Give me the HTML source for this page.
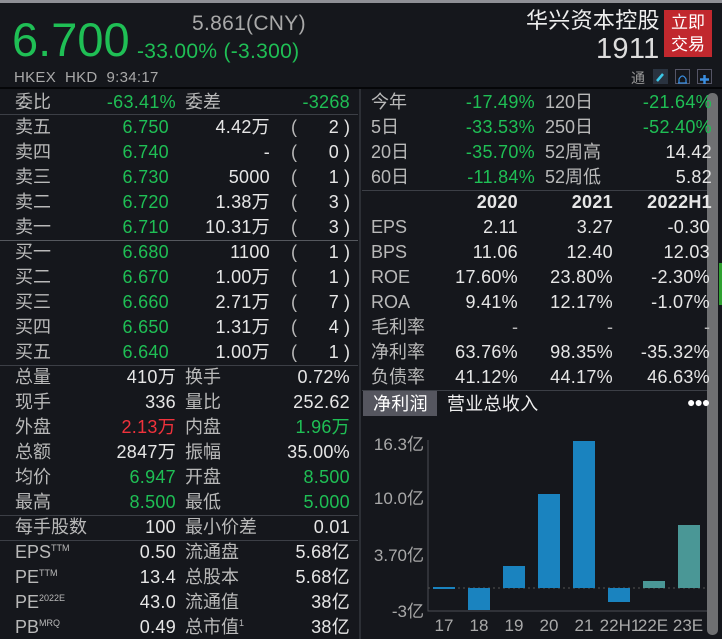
<!DOCTYPE html><html><head><meta charset="utf-8"><style>
*{margin:0;padding:0;box-sizing:border-box}
body{width:722px;height:639px;background:#15171c;overflow:hidden;position:relative;font-family:"Liberation Sans","Noto Sans CJK SC",sans-serif;color:#e6e6e6;font-size:18px}
.a{position:absolute;white-space:nowrap;line-height:20px;letter-spacing:0.3px}
.l{color:#b9b9b9;letter-spacing:0}
.g{color:#1fbf55}
.r{color:#f0323c}
.R{text-align:right}
.h{position:absolute;height:1px;background:#3c3f46}
sup{font-size:9px;line-height:0;vertical-align:7px;letter-spacing:0}
</style></head><body>
<div style="position:absolute;left:0;top:0;width:722px;height:3px;background:#8f9096"></div>
<div class="a g" style="left:12px;top:14px;font-size:47px;line-height:52px;letter-spacing:0">6.700</div>
<div class="a" style="left:192px;top:12px;font-size:21px;line-height:24px;color:#a9a9a9">5.861(CNY)</div>
<div class="a g" style="left:137px;top:40px;font-size:21px;line-height:24px">-33.00% (-3.300)</div>
<div class="a" style="left:526px;top:8px;font-size:22px;line-height:26px;color:#eee">华兴资本控股</div>
<div class="a" style="left:596px;top:34px;font-size:29px;line-height:30px;color:#ddd">1911</div>
<div style="position:absolute;left:664px;top:10px;width:48px;height:47px;background:#c1282e;color:#fff;font-size:17px;line-height:22px;text-align:center;padding-top:2px">立即<br>交易</div>
<div class="a" style="left:14px;top:68px;font-size:15px;color:#a9a9a9">HKEX&nbsp; HKD&nbsp; 9:34:17</div>
<div class="a" style="left:631px;top:68px;font-size:14px;color:#999">通</div>
<div style="position:absolute;left:653px;top:69px;width:15px;height:15px;background:#2a3340"><svg width="15" height="15"><path d="M4 11 L10 4" stroke="#3cc8e8" stroke-width="2.5"/></svg></div>
<div style="position:absolute;left:675px;top:69px;width:15px;height:15px;border:1px solid #556"><svg width="13" height="13"><path d="M3 10 L3 6 Q6.5 0 10 6 L10 10 Z M2 10 H11" stroke="#3a8ee0" fill="none" stroke-width="1.2"/></svg></div>
<div style="position:absolute;left:697px;top:69px;width:15px;height:15px;border:1px solid #556"><svg width="13" height="13"><path d="M6.5 2 V11 M2 6.5 H11" stroke="#3a8ee0" stroke-width="2.5"/></svg></div>
<div style="position:absolute;left:0;top:87px;width:722px;height:2px;background:#050608"></div>
<div style="position:absolute;left:359px;top:89px;width:2px;height:550px;background:#2c2f35"></div>
<div style="position:absolute;left:707px;top:93px;width:11px;height:542px;background:#6f7072;border-radius:5px"></div>
<div style="position:absolute;left:719px;top:263px;width:3px;height:42px;background:#2fa030"></div>

<!-- left -->
<div class="a l" style="left:15px;top:92px">委比</div><div class="a g R" style="right:546px;top:92px">-63.41%</div><div class="a l" style="left:185px;top:92px">委差</div><div class="a g R" style="right:372px;top:92px">-3268</div>
<div class="h" style="left:0;top:114px;width:358px"></div>
<div class="h" style="left:0;top:240px;width:358px;background:#55585e"></div>
<div class="h" style="left:0;top:365px;width:358px"></div>
<div class="h" style="left:0;top:515px;width:358px"></div>
<div class="h" style="left:0;top:540px;width:358px"></div>

<div class="a l" style="left:15px;top:117px">卖五</div><div class="a g R" style="right:553px;top:117px">6.750</div><div class="a R" style="right:452px;top:117px">4.42万</div><div class="a l" style="left:291px;top:117px">(</div><div class="a R" style="right:383px;top:117px">2</div><div class="a" style="left:344px;top:117px">)</div>
<div class="a l" style="left:15px;top:142px">卖四</div><div class="a g R" style="right:553px;top:142px">6.740</div><div class="a R" style="right:452px;top:142px">-</div><div class="a l" style="left:291px;top:142px">(</div><div class="a R" style="right:383px;top:142px">0</div><div class="a" style="left:344px;top:142px">)</div>
<div class="a l" style="left:15px;top:167px">卖三</div><div class="a g R" style="right:553px;top:167px">6.730</div><div class="a R" style="right:452px;top:167px">5000</div><div class="a l" style="left:291px;top:167px">(</div><div class="a R" style="right:383px;top:167px">1</div><div class="a" style="left:344px;top:167px">)</div>
<div class="a l" style="left:15px;top:192px">卖二</div><div class="a g R" style="right:553px;top:192px">6.720</div><div class="a R" style="right:452px;top:192px">1.38万</div><div class="a l" style="left:291px;top:192px">(</div><div class="a R" style="right:383px;top:192px">3</div><div class="a" style="left:344px;top:192px">)</div>
<div class="a l" style="left:15px;top:217px">卖一</div><div class="a g R" style="right:553px;top:217px">6.710</div><div class="a R" style="right:452px;top:217px">10.31万</div><div class="a l" style="left:291px;top:217px">(</div><div class="a R" style="right:383px;top:217px">3</div><div class="a" style="left:344px;top:217px">)</div>
<div class="a l" style="left:15px;top:242px">买一</div><div class="a g R" style="right:553px;top:242px">6.680</div><div class="a R" style="right:452px;top:242px">1100</div><div class="a l" style="left:291px;top:242px">(</div><div class="a R" style="right:383px;top:242px">1</div><div class="a" style="left:344px;top:242px">)</div>
<div class="a l" style="left:15px;top:267px">买二</div><div class="a g R" style="right:553px;top:267px">6.670</div><div class="a R" style="right:452px;top:267px">1.00万</div><div class="a l" style="left:291px;top:267px">(</div><div class="a R" style="right:383px;top:267px">1</div><div class="a" style="left:344px;top:267px">)</div>
<div class="a l" style="left:15px;top:292px">买三</div><div class="a g R" style="right:553px;top:292px">6.660</div><div class="a R" style="right:452px;top:292px">2.71万</div><div class="a l" style="left:291px;top:292px">(</div><div class="a R" style="right:383px;top:292px">7</div><div class="a" style="left:344px;top:292px">)</div>
<div class="a l" style="left:15px;top:317px">买四</div><div class="a g R" style="right:553px;top:317px">6.650</div><div class="a R" style="right:452px;top:317px">1.31万</div><div class="a l" style="left:291px;top:317px">(</div><div class="a R" style="right:383px;top:317px">4</div><div class="a" style="left:344px;top:317px">)</div>
<div class="a l" style="left:15px;top:342px">买五</div><div class="a g R" style="right:553px;top:342px">6.640</div><div class="a R" style="right:452px;top:342px">1.00万</div><div class="a l" style="left:291px;top:342px">(</div><div class="a R" style="right:383px;top:342px">1</div><div class="a" style="left:344px;top:342px">)</div>

<div class="a l" style="left:15px;top:367px">总量</div><div class="a R" style="right:546px;top:367px">410万</div><div class="a l" style="left:185px;top:367px">换手</div><div class="a R" style="right:372px;top:367px">0.72%</div>
<div class="a l" style="left:15px;top:392px">现手</div><div class="a R" style="right:546px;top:392px">336</div><div class="a l" style="left:185px;top:392px">量比</div><div class="a R" style="right:372px;top:392px">252.62</div>
<div class="a l" style="left:15px;top:417px">外盘</div><div class="a r R" style="right:546px;top:417px">2.13万</div><div class="a l" style="left:185px;top:417px">内盘</div><div class="a g R" style="right:372px;top:417px">1.96万</div>
<div class="a l" style="left:15px;top:442px">总额</div><div class="a R" style="right:546px;top:442px">2847万</div><div class="a l" style="left:185px;top:442px">振幅</div><div class="a R" style="right:372px;top:442px">35.00%</div>
<div class="a l" style="left:15px;top:467px">均价</div><div class="a g R" style="right:546px;top:467px">6.947</div><div class="a l" style="left:185px;top:467px">开盘</div><div class="a g R" style="right:372px;top:467px">8.500</div>
<div class="a l" style="left:15px;top:492px">最高</div><div class="a g R" style="right:546px;top:492px">8.500</div><div class="a l" style="left:185px;top:492px">最低</div><div class="a g R" style="right:372px;top:492px">5.000</div>
<div class="a l" style="left:15px;top:517px">每手股数</div><div class="a R" style="right:546px;top:517px">100</div><div class="a l" style="left:185px;top:517px">最小价差</div><div class="a R" style="right:372px;top:517px">0.01</div>
<div class="a l" style="left:15px;top:542px">EPS<sup>TTM</sup></div><div class="a R" style="right:546px;top:542px">0.50</div><div class="a l" style="left:185px;top:542px">流通盘</div><div class="a R" style="right:372px;top:542px">5.68亿</div>
<div class="a l" style="left:15px;top:567px">PE<sup>TTM</sup></div><div class="a R" style="right:546px;top:567px">13.4</div><div class="a l" style="left:185px;top:567px">总股本</div><div class="a R" style="right:372px;top:567px">5.68亿</div>
<div class="a l" style="left:15px;top:592px">PE<sup>2022E</sup></div><div class="a R" style="right:546px;top:592px">43.0</div><div class="a l" style="left:185px;top:592px">流通值</div><div class="a R" style="right:372px;top:592px">38亿</div>
<div class="a l" style="left:15px;top:617px">PB<sup>MRQ</sup></div><div class="a R" style="right:546px;top:617px">0.49</div><div class="a l" style="left:185px;top:617px">总市值<sup>1</sup></div><div class="a R" style="right:372px;top:617px">38亿</div>

<!-- right -->
<div class="a l" style="left:371px;top:92px">今年</div><div class="a g R" style="right:187px;top:92px">-17.49%</div><div class="a l" style="left:545px;top:92px">120日</div><div class="a g R" style="right:10px;top:92px">-21.64%</div>
<div class="a l" style="left:371px;top:117px">5日</div><div class="a g R" style="right:187px;top:117px">-33.53%</div><div class="a l" style="left:545px;top:117px">250日</div><div class="a g R" style="right:10px;top:117px">-52.40%</div>
<div class="a l" style="left:371px;top:142px">20日</div><div class="a g R" style="right:187px;top:142px">-35.70%</div><div class="a l" style="left:545px;top:142px">52周高</div><div class="a R" style="right:10px;top:142px">14.42</div>
<div class="a l" style="left:371px;top:167px">60日</div><div class="a g R" style="right:187px;top:167px">-11.84%</div><div class="a l" style="left:545px;top:167px">52周低</div><div class="a R" style="right:10px;top:167px">5.82</div>
<div class="h" style="left:362px;top:190px;width:345px"></div>
<div class="a R" style="right:204px;top:192px;font-weight:bold">2020</div><div class="a R" style="right:109px;top:192px;font-weight:bold">2021</div><div class="a R" style="right:10px;top:192px;font-weight:bold">2022H1</div>
<div class="a l" style="left:371px;top:217px">EPS</div><div class="a R" style="right:204px;top:217px">2.11</div><div class="a R" style="right:109px;top:217px">3.27</div><div class="a R" style="right:12px;top:217px">-0.30</div>
<div class="a l" style="left:371px;top:242px">BPS</div><div class="a R" style="right:204px;top:242px">11.06</div><div class="a R" style="right:109px;top:242px">12.40</div><div class="a R" style="right:12px;top:242px">12.03</div>
<div class="a l" style="left:371px;top:267px">ROE</div><div class="a R" style="right:204px;top:267px">17.60%</div><div class="a R" style="right:109px;top:267px">23.80%</div><div class="a R" style="right:12px;top:267px">-2.30%</div>
<div class="a l" style="left:371px;top:292px">ROA</div><div class="a R" style="right:204px;top:292px">9.41%</div><div class="a R" style="right:109px;top:292px">12.17%</div><div class="a R" style="right:12px;top:292px">-1.07%</div>
<div class="a l" style="left:371px;top:317px">毛利率</div><div class="a l R" style="right:204px;top:317px">-</div><div class="a l R" style="right:109px;top:317px">-</div><div class="a l R" style="right:12px;top:317px">-</div>
<div class="a l" style="left:371px;top:342px">净利率</div><div class="a R" style="right:204px;top:342px">63.76%</div><div class="a R" style="right:109px;top:342px">98.35%</div><div class="a R" style="right:12px;top:342px">-35.32%</div>
<div class="a l" style="left:371px;top:367px">负债率</div><div class="a R" style="right:204px;top:367px">41.12%</div><div class="a R" style="right:109px;top:367px">44.17%</div><div class="a R" style="right:12px;top:367px">46.63%</div>
<div class="h" style="left:362px;top:390px;width:345px"></div>
<div style="position:absolute;left:363px;top:391px;width:74px;height:25px;background:#55565f"></div>
<div class="a" style="left:373px;top:394px;color:#fff">净利润</div>
<div class="a" style="left:447px;top:394px;color:#eee">营业总收入</div>
<div class="a" style="left:687px;top:392px;font-size:14px;color:#fff;letter-spacing:-1px">●●●</div>

<svg style="position:absolute;left:362px;top:420px" width="345" height="219">
<g font-family="Liberation Sans,Noto Sans CJK SC,sans-serif" font-size="17" fill="#a9a9a9" text-anchor="end">
<text x="62" y="30">16.3亿</text><text x="62" y="84">10.0亿</text><text x="62" y="141">3.70亿</text><text x="62" y="197">-3亿</text>
</g>
<g font-family="Liberation Sans,sans-serif" font-size="17" fill="#a9a9a9" text-anchor="middle">
<text x="82" y="211">17</text><text x="117" y="211">18</text><text x="152" y="211">19</text><text x="187" y="211">20</text><text x="222" y="211">21</text><text x="258" y="211">22H1</text><text x="291" y="211">22E</text><text x="326" y="211">23E</text>
</g>
<path d="M66 20 V191 H345" stroke="#4a4d54" fill="none"/>
<path d="M66 168 H345" stroke="#555" stroke-dasharray="2 3"/>
<g fill="#1a83bf">
<rect x="71" y="167" width="22" height="2"/><rect x="106" y="168" width="22" height="22"/><rect x="141" y="146" width="22" height="22"/><rect x="176" y="74" width="22" height="94"/><rect x="211" y="21" width="22" height="147"/><rect x="246" y="168" width="22" height="14"/>
</g>
<g fill="#4a9796"><rect x="281" y="161" width="22" height="7"/><rect x="316" y="105" width="22" height="63"/></g>
</svg>
</body></html>
